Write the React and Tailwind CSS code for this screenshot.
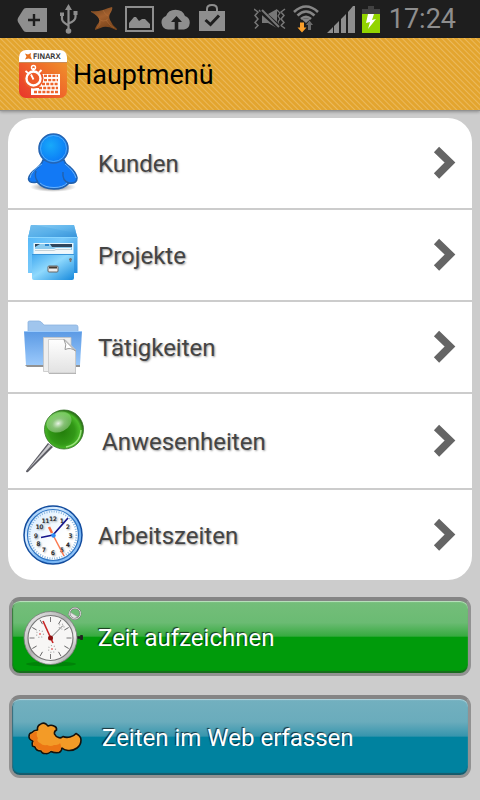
import React from "react";

function FinarxMark({ className }) {
  return (
    <svg viewBox="0 0 26 26" className={className} aria-hidden="true">
      <defs>
        <linearGradient id="mark" x1="0" y1="0" x2="0.4" y2="1">
          <stop offset="0" stopColor="#6f431f" />
          <stop offset="0.5" stopColor="#a3602e" />
          <stop offset="1" stopColor="#7c461c" />
        </linearGradient>
      </defs>
      <path d="M0 5Q5 6 12 4Q17 2 21 1Q22 2 20 6Q17 10 19 14Q21 19 26 23Q26 25 23 23Q17 20 12 21Q7 23 4 24Q4 22 6 19Q9 16 8 13Q6 9 0 6Z" fill="url(#mark)" />
      <path d="M12 4Q14 9 17 10M8 13Q12 17 17 13M9 15Q10 19 6 22M15 14Q18 19 23 22" stroke="#c07a40" strokeWidth="0.8" fill="none" opacity="0.5" />
    </svg>
  );
}

function StatusBar() {
  return (
    <div className="flex h-[38px] items-center bg-[#1e1e1e] pr-6 pl-[17px] text-[#8e8e8e]">
      <svg viewBox="0 0 30 24" className="mt-[2px] h-6 w-[30px] shrink-0" aria-hidden="true">
        <path d="M9 0H30V24H9Q7 24 6 22L1 14Q0 12 1 10L6 2Q7 0 9 0Z" fill="#8e8e8e" />
        <path d="M17 6V18M11 12H23" stroke="#1e1e1e" strokeWidth="2.4" />
      </svg>
      <svg viewBox="0 0 20 30" className="ml-3 h-[30px] w-5 shrink-0" aria-hidden="true" fill="none" stroke="#8e8e8e" strokeWidth="2.2">
        <path d="M9.500 4V26M3 11V15Q3 18 9.500 21.500M16.500 9V13Q16.500 17 9.500 19.500" />
        <path d="M9.500 0L13 6H6Z M1 8.500H5V12H1Z M14.500 7H18.500V11H14.500Z" fill="#8e8e8e" stroke="none" />
        <circle cx="9.500" cy="27" r="2.800" fill="#8e8e8e" stroke="none" />
      </svg>
      <FinarxMark className="ml-3 h-[26px] w-[26px] shrink-0" />
      <svg viewBox="0 0 29 26" className="ml-2 h-[26px] w-[29px] shrink-0" aria-hidden="true">
        <rect x="1" y="1" width="27" height="24" fill="none" stroke="#8e8e8e" strokeWidth="2" />
        <path d="M4 22V17L9 11L11 11L14 15L17 13L20 13L25 18V22Z" fill="#8e8e8e" />
      </svg>
      <svg viewBox="0 0 30 22" className="ml-[7px] h-[22px] w-[30px] shrink-0" aria-hidden="true">
        <path d="M7 21.500A7 7 0 0 1 5 8A10 9 0 0 1 24 8A7 7 0 0 1 23 21.500Z" fill="#8e8e8e" />
        <path d="M15.500 22V12" stroke="#1e1e1e" strokeWidth="3.600" />
        <path d="M10 14L15.500 8L21 14Z" fill="#1e1e1e" />
      </svg>
      <svg viewBox="0 0 26 27" className="mb-1 ml-2 h-[27px] w-[26px] shrink-0" aria-hidden="true">
        <path d="M8 8V5Q8 1 13 1T18 5V8" fill="none" stroke="#8e8e8e" strokeWidth="2" />
        <path d="M0 7H26V27H0Z" fill="#8e8e8e" />
        <path d="M6.500 16L11.500 20.500L20 11.500" fill="none" stroke="#1e1e1e" strokeWidth="3" />
      </svg>
      <div className="ml-auto flex items-center">
        <svg viewBox="0 0 32 22" className="h-[22px] w-8 shrink-0" aria-hidden="true" fill="none" stroke="#777" strokeWidth="1.800">
          <path d="M0 1L4 4L1 7.500L4 11L1 14.500L4 17.500L1 20.500M31 1L27 4L30 7.500L27 11L30 14.500L27 17.500L31 20.500" strokeWidth="1.500" />
          <path d="M5 2L8 5.500M23 2L26 5L24 8L26 11L24 14L25 17" strokeWidth="1.200" />
          <path d="M8 6H14L23 1V20L14 15H8Z" fill="#777" stroke="none" />
          <path d="M7 3L25 19" stroke="#1e1e1e" strokeWidth="5" />
          <path d="M8 2L25 19" strokeWidth="2" />
        </svg>
        <svg viewBox="0 0 28 28" className="ml-[6px] h-7 w-7 shrink-0" aria-hidden="true" fill="none" stroke="#858585" strokeWidth="2.600">
          <path d="M2 7Q14-4 26 7M5.500 10.500Q14 2.500 22.500 10.500M9 14Q14 9.500 19 14" />
          <path d="M10 14.500Q14 12 18 14.500L14 18Z" fill="#858585" stroke="none" />
          <path d="M8 17.500H12V22.500H14.500L10 27.500L5.500 22.500H8Z" fill="#fba02b" stroke="none" />
          <path d="M16 25V20H14L17.500 15.500L21 20H19V25Z" fill="#6a6a6a" stroke="none" />
        </svg>
        <svg viewBox="0 0 28 27" className="ml-[7px] h-[27px] w-7 shrink-0" aria-hidden="true" fill="#8e8e8e">
          <path d="M0 27L6 21V27ZM7 27V20L12 15V27ZM14 27V13L19 8V27ZM21 27V6L26 0H28V27Z" />
        </svg>
        <svg viewBox="0 0 18 27" className="ml-[7px] h-[27px] w-[18px] shrink-0" aria-hidden="true">
          <path d="M6 0H12V3H18V9H0V3H6Z" fill="#424242" />
          <path d="M0 8H18V27H0Z" fill="#92d400" />
          <path d="M6 8H12L10 14L14 13L6 23L8 16L4 17Z" fill="#fff" />
        </svg>
        <time className="ml-[9px] font-['Roboto',sans-serif] text-[27px] leading-8">17:24</time>
      </div>
    </div>
  );
}

function AppLogo() {
  return (
    <svg viewBox="0 0 48 48" className="h-12 w-12 shrink-0" role="img" aria-label="Finarx">
      <defs>
        <linearGradient id="logo" x1="0" y1="1" x2="1" y2="0">
          <stop offset="0" stopColor="#e8342b" />
          <stop offset="0.500" stopColor="#f0692a" />
          <stop offset="1" stopColor="#eea02c" />
        </linearGradient>
        <clipPath id="logoClip"><rect width="48" height="48" rx="7" /></clipPath>
      </defs>
      <g clipPath="url(#logoClip)">
        <rect width="48" height="48" fill="url(#logo)" />
        <rect width="48" height="12" fill="#fff" />
        <rect y="12" width="48" height="1" fill="#c98b58" />
      </g>
      <path d="M6 3.500L9 4.500L12 3L11.500 6L13 9.500L9.500 8.500L6 9.500L7.500 6.500Z" fill="#e8711f" />
      <text x="14" y="9" fontSize="7.500" fontFamily="'DejaVu Sans', sans-serif" fill="#222" stroke="#222" strokeWidth="0.200">FINARX</text>
      <path d="M23 24H41V45H12V38H20Z" fill="#fff" />
      <path d="M25 26H39M25 30H39M23 34H39M20 38H39M15 42H39" stroke="#ee652b" strokeWidth="2.600" strokeDasharray="3 1.200" />
      <path d="M22 28H40" stroke="#fff" strokeWidth="1.600" />
      <circle cx="14.500" cy="28.500" r="10" fill="#ee5a29" />
      <circle cx="14.500" cy="28.500" r="7" fill="none" stroke="#fff" strokeWidth="2.400" />
      <path d="M14.500 29.500L12 24.500M14.500 22V18M6.500 21L9 23M22.500 20L20 22.500" stroke="#fff" strokeWidth="1.800" />
      <circle cx="14.500" cy="17.500" r="2" fill="none" stroke="#fff" strokeWidth="1.400" />
    </svg>
  );
}

function CustomerIcon() {
  return (
    <svg viewBox="0 0 60 60" className="h-[60px] w-[60px] shrink-0" aria-hidden="true">
      <defs>
        <radialGradient id="head" cx="0.400" cy="0.400" r="0.600">
          <stop offset="0" stopColor="#18a9fa" />
          <stop offset="1" stopColor="#0b7bf6" />
        </radialGradient>
        <radialGradient id="shade">
          <stop offset="0" stopColor="#222" stopOpacity="0.800" />
          <stop offset="1" stopColor="#555" stopOpacity="0" />
        </radialGradient>
      </defs>
      <ellipse cx="30" cy="54" rx="23" ry="5" fill="url(#shade)" />
      <path d="M20 27Q19 31 13 36Q6 41 5.500 46Q6 50 12 49.500L14 49Q20 56 31 56Q41 56 46 50Q54 51 54 45Q53 39 47 34Q42 31 41 27Z" fill="#1279f5" stroke="#2261ad" strokeWidth="1.600" />
      <path d="M19 31Q8 38 7 45M42 31Q51 38 53 45M17 50Q22 54.500 31 54.500Q40 54.500 44 50" stroke="#69b2fb" strokeWidth="1" fill="none" />
      <path d="M13 38Q11 44 15 49M40 39Q39 48 46 50" stroke="#2261ad" strokeWidth="1.400" fill="none" />
      <circle cx="30.500" cy="15.500" r="14.500" fill="url(#head)" stroke="#2665b3" strokeWidth="1.600" />
      <circle cx="30.500" cy="15.500" r="13" fill="none" stroke="#5fb0f8" strokeWidth="0.800" />
    </svg>
  );
}

function CabinetIcon() {
  return (
    <svg viewBox="0 0 60 60" className="h-[60px] w-[60px] shrink-0" aria-hidden="true">
      <defs>
        <linearGradient id="cabTop" x1="0" y1="0" x2="1" y2="1">
          <stop offset="0" stopColor="#8ccdf3" />
          <stop offset="0.500" stopColor="#63b7ed" />
          <stop offset="1" stopColor="#338dd6" />
        </linearGradient>
        <linearGradient id="cabBody" x1="0" y1="0" x2="1" y2="1">
          <stop offset="0" stopColor="#4cb4f8" />
          <stop offset="0.500" stopColor="#78c9fa" />
          <stop offset="1" stopColor="#248bdc" />
        </linearGradient>
        <linearGradient id="cabDrawer" x1="0" y1="0" x2="1" y2="1">
          <stop offset="0" stopColor="#42a9f0" />
          <stop offset="0.450" stopColor="#8fd9fd" />
          <stop offset="1" stopColor="#1689dc" />
        </linearGradient>
      </defs>
      <path d="M8 0H51L54.500 13V48H5V13Z" fill="url(#cabBody)" />
      <path d="M8 0H51L54.500 13H5Z" fill="url(#cabTop)" />
      <path d="M8 0H12L52 8L54 13H5Z" fill="#3f9fe0" opacity="0.300" />
      <path d="M5 12.500H54.500" stroke="#8ad6ff" />
      <path d="M10.500 18H50.500V29H10.500Z" fill="#e8f6fd" />
      <path d="M12 19H49V22H12Z" fill="#30455c" />
      <path d="M12 22L17 19H27L29 22H49V25H12Z" fill="#8ccbee" />
      <path d="M22 19H26V21H22Z" fill="#2f86cc" />
      <path d="M12 24H31L33 23H48V28H12Z" fill="#f1f7fa" />
      <path d="M12 25.500H31L33 24.500H48" stroke="#b7c6cf" strokeWidth="0.800" fill="none" />
      <path d="M9 29H51V53Q51 55 49 55H11Q9 55 9 53Z" fill="url(#cabDrawer)" />
      <path d="M9 29.500H51" stroke="#3995d9" />
      <rect x="25" y="41" width="10" height="6" rx="1" fill="#eee" stroke="#666" />
      <path d="M26 42.500H34" stroke="#433b32" strokeWidth="2" />
      <path d="M47.500 33V37M46 34.500H49" stroke="#777" strokeWidth="1.500" />
    </svg>
  );
}

function FolderIcon() {
  return (
    <svg viewBox="0 0 60 60" className="h-[60px] w-[60px] shrink-0" aria-hidden="true">
      <defs>
        <linearGradient id="folder" x1="0" y1="0" x2="0" y2="1">
          <stop offset="0" stopColor="#5a99e4" />
          <stop offset="1" stopColor="#9bc9fb" />
        </linearGradient>
        <linearGradient id="paper" x1="0" y1="0" x2="0" y2="1">
          <stop offset="0" stopColor="#fff" />
          <stop offset="1" stopColor="#e2e2e2" />
        </linearGradient>
      </defs>
      <path d="M5 15V5Q5 4 7 4H16Q18 4 21 8H53Q55 8 55 10V15Z" fill="#a0c5ed" stroke="#8ab2df" strokeWidth="0.800" />
      <path d="M2 48H57V50H4Z" fill="#777" opacity="0.800" />
      <path d="M1 14H59L57 48H3Z" fill="url(#folder)" />
      <path d="M1 14.500H59" stroke="#9ccafb" />
      <path d="M20.500 20.500H48V54.500H20.500Z" fill="#eee" stroke="#c4c4c4" strokeWidth="0.800" />
      <path d="M26 23H42L53 33V57H26Z" fill="#aaa" />
      <path d="M25.500 22.500H42L52.500 33V56H25.500Z" fill="url(#paper)" stroke="#c8c8c8" strokeWidth="0.800" />
      <path d="M41 22.500Q44 28 42 32.500Q48 30 52.500 34Z" fill="#fff" stroke="#999" />
    </svg>
  );
}

function PinIcon() {
  return (
    <svg viewBox="0 0 64 64" className="h-16 w-16 shrink-0" aria-hidden="true">
      <defs>
        <radialGradient id="pin" cx="0.450" cy="0.550" r="0.550">
          <stop offset="0" stopColor="#237d0b" />
          <stop offset="0.600" stopColor="#329817" />
          <stop offset="0.850" stopColor="#4cbc2b" />
          <stop offset="1" stopColor="#2b6f18" />
        </radialGradient>
        <radialGradient id="pinShine" cx="0.450" cy="0.550" r="0.600">
          <stop offset="0" stopColor="#fff" stopOpacity="0.900" />
          <stop offset="0.400" stopColor="#d2ecc8" stopOpacity="0.550" />
          <stop offset="1" stopColor="#c0e8b4" stopOpacity="0.300" />
        </radialGradient>
      </defs>
      <path d="M25 34L30 38L5 63Q3 64 3 62Z" fill="#5b5b63" />
      <path d="M26 35L28 37L4 62Z" fill="#cacacd" />
      <circle cx="41" cy="20.500" r="19.500" fill="url(#pin)" stroke="#326f25" strokeWidth="0.800" />
      <ellipse cx="36" cy="13" rx="13" ry="10" fill="url(#pinShine)" transform="rotate(-25 36 13)" />
      <path d="M58 21Q57 35 43 38" stroke="#b1ed95" strokeWidth="1.500" fill="none" opacity="0.800" />
    </svg>
  );
}

const numerals = [
  [30, 16, "12"], [39, 18, "1"], [45, 24, "2"], [47.5, 32.5, "3"],
  [45, 41.5, "4"], [39, 47, "5"], [30, 49.5, "6"], [21, 47, "7"],
  [15.500, 40.5, "8"], [13, 32.500, "9"], [16.500, 23.5, "10"], [22.5, 18, "11"],
];

function ClockIcon() {
  return (
    <svg viewBox="0 0 60 60" className="h-[60px] w-[60px] shrink-0" aria-hidden="true">
      <defs>
        <linearGradient id="rim" x1="0" y1="0" x2="1" y2="1">
          <stop offset="0" stopColor="#6db1f4" />
          <stop offset="0.300" stopColor="#e0f0ff" />
          <stop offset="0.650" stopColor="#64aaf0" />
          <stop offset="1" stopColor="#b7daff" />
        </linearGradient>
        <linearGradient id="face" x1="0" y1="0" x2="1" y2="1">
          <stop offset="0" stopColor="#d7ecff" />
          <stop offset="0.600" stopColor="#fff" />
        </linearGradient>
      </defs>
      <circle cx="30" cy="30" r="29" fill="url(#rim)" stroke="#124c9e" strokeWidth="1.500" />
      <circle cx="30" cy="30" r="25.500" fill="url(#face)" stroke="#2e75c4" strokeWidth="1.200" />
      <circle cx="30" cy="30" r="23.500" fill="none" stroke="#8db8df" strokeWidth="2" strokeDasharray="1 1.461" />
      <g fontFamily="'DejaVu Sans', sans-serif" fontSize="6" fill="#111" stroke="#111" strokeWidth="0.200" textAnchor="middle">
        {numerals.map(([x, y, n]) => <text key={n} x={x} y={y}>{n}</text>)}
      </g>
      <path d="M26 22L29 28" stroke="#fb6a3b" strokeWidth="2.500" />
      <path d="M30 30L41 51" stroke="#fb7950" strokeWidth="1.500" />
      <path d="M18 32.500L30 30L45 13" stroke="#15158c" strokeWidth="1.700" fill="none" />
      <circle cx="30.500" cy="30.500" r="2.200" fill="#2e8df4" />
    </svg>
  );
}

const ticks = [0, 30, 60, 90, 120, 150, 180, 210, 240, 270, 300, 330];

function StopwatchIcon() {
  return (
    <svg viewBox="0 0 60 60" className="h-[60px] w-[60px] shrink-0" aria-hidden="true">
      <defs>
        <linearGradient id="steel" x1="0" y1="0" x2="1" y2="1">
          <stop offset="0" stopColor="#f2f2f2" />
          <stop offset="0.450" stopColor="#b0b0b0" />
          <stop offset="0.700" stopColor="#eee" />
          <stop offset="1" stopColor="#777" />
        </linearGradient>
      </defs>
      <ellipse cx="28" cy="57" rx="25" ry="2.500" fill="#003b05" opacity="0.250" />
      <path d="M45 7L49 12.500L55 10Q50 7 47 5Z" fill="#e4e4e4" stroke="#999" strokeWidth="0.600" />
      <circle cx="52" cy="6.500" r="5.500" fill="none" stroke="#777" strokeWidth="1.800" />
      <circle cx="52" cy="6.500" r="5.500" fill="none" stroke="#ddd" strokeWidth="1" />
      <path d="M54 30.500H60M58.500 28V33" stroke="#222" strokeWidth="2.500" />
      <circle cx="27.500" cy="31" r="26.500" fill="url(#steel)" stroke="#777" strokeWidth="0.800" />
      <circle cx="27.500" cy="31" r="22.500" fill="#f7f6f5" stroke="#777" strokeWidth="1.200" />
      <g stroke="#555" strokeWidth="0.800">
        {ticks.map((a) => <path key={a} d="M27.500 10V15" transform={`rotate(${a} 27.500 31)`} />)}
      </g>
      <g fill="none" stroke="#aaa" strokeWidth="1.200" strokeDasharray="1 2">
        <circle cx="17" cy="27" r="3.500" />
        <circle cx="38.500" cy="19.500" r="2.500" />
        <circle cx="29" cy="42" r="3.500" />
      </g>
      <path d="M16 27H18M28 42H30" stroke="#d33" strokeWidth="1.200" />
      <path d="M27.500 31L40 18.500" stroke="#777" strokeWidth="1" />
      <path d="M20 14L30 36" stroke="#c72525" strokeWidth="1.600" />
      <circle cx="27.500" cy="31" r="2.500" fill="#8f1010" />
    </svg>
  );
}

function CroissantIcon() {
  return (
    <svg viewBox="0 0 64 64" className="h-16 w-16 shrink-0" aria-hidden="true">
      <path d="M9 27.500Q11 25 14.500 25Q14 21 17 19.500Q20 17 23 19L25 21Q28 19.500 31 21Q34 22 33.500 25Q31 26 31.500 29Q33 32 35.500 32.500Q38 33.500 40 31.500Q43 33 47 32Q51 31 53 28.500Q58 31 58 35Q58 40 54 43Q50 46 45 45.500Q41 45 39 43Q38 47 36 47.500Q31 48 28 46.500Q25 49 23 48.500Q19 49 18 46Q13 46 12 42L9.500 41Q8.500 38 10 36Q6 34.500 6 31.500Q6 28 9 27.500Z" fill="#f39b27" stroke="#15110c" strokeWidth="1.600" strokeLinejoin="round" />
      <path d="M9.500 28.500Q12 26 14 27Q13 31 15 33Q13 36 17 38Q20 41 24 40Q28 42 31 40Q36 40 37 38Q39 42 37 46Q31 47 28 45Q25 48 23 47.500Q20 48 19 45Q14 45 13 41.500L10.500 40.500Q10 38 11 36Q7 34 7 31.500Q7 29 9.500 28.500Z" fill="#ec7614" />
    </svg>
  );
}

function Chevron() {
  return (
    <svg viewBox="0 0 24 34" className="ml-auto h-[34px] w-6 shrink-0" aria-hidden="true">
      <path d="M3.500 3.500L17 16.500L3.500 30" fill="none" stroke="#656565" strokeWidth="7.500" />
    </svg>
  );
}

const entries = [
  ["Kunden", CustomerIcon],
  ["Projekte", CabinetIcon],
  ["Tätigkeiten", FolderIcon],
  ["Anwesenheiten", PinIcon],
  ["Arbeitszeiten", ClockIcon],
];

function ActionButton({ tone, icon: Icon, children }) {
  return (
    <button
      type="button"
      className={`flex w-full items-center gap-[15px] rounded-[11px] border-[3px] border-t-4 border-[#929292] border-t-[#858585] px-[11px] py-[6px] text-left text-2xl text-white [text-shadow:-1px_-1px_1px_rgba(0,0,0,0.7)] ${tone}`}
    >
      <Icon />
      <span className="pt-[2px]">{children}</span>
    </button>
  );
}

export default function App() {
  return (
    <div className="flex min-h-screen flex-col bg-[#cccccc] font-['Roboto',sans-serif]">
      <StatusBar />
      <header className="flex h-[73px] items-center gap-[6px] border-b border-[#929292] bg-[repeating-linear-gradient(45deg,#e3a52f_0px,#e3a52f_2px,#ebb95c_3px,#e3a52f_4px)] pl-[19px] shadow-[0_1px_3px_rgba(0,0,0,0.3)]">
        <AppLogo />
        <h1 className="pt-[2px] text-[27px] leading-8 text-black">Hauptmenü</h1>
      </header>
      <main className="flex flex-col px-2 pt-[7px]">
        <nav className="divide-y-2 divide-[#cccccc] overflow-hidden rounded-[24px] bg-white">
          {entries.map(([label, Icon]) => (
            <a key={label} href="#" className="flex items-center gap-[15px] p-[15px] text-2xl text-[#444444] [text-shadow:1px_1px_2px_rgba(0,0,0,0.4)]">
              <Icon />
              <span className="pt-[2px]">{label}</span>
              <Chevron />
            </a>
          ))}
        </nav>
        <div className="mt-[17px] flex flex-col gap-[19px] px-px">
          <ActionButton icon={StopwatchIcon} tone="bg-[linear-gradient(#74be7a_0%,#6bbb73_30%,#36aa3f_49%,#009b0b_50%)] shadow-[inset_0_1px_1px_#bfe4c2,inset_0_-2px_1px_#176b1d,inset_1px_0_1px_#2c6c31]">
            Zeit aufzeichnen
          </ActionButton>
          <ActionButton icon={CroissantIcon} tone="bg-[linear-gradient(#73b0bf_0%,#6aacbc_30%,#3695ad_49%,#00829f_50%)] shadow-[inset_0_1px_1px_#b5d8e0,inset_0_-2px_1px_#17596a,inset_1px_0_1px_#2c6270]">
            Zeiten im Web erfassen
          </ActionButton>
        </div>
      </main>
    </div>
  );
}
